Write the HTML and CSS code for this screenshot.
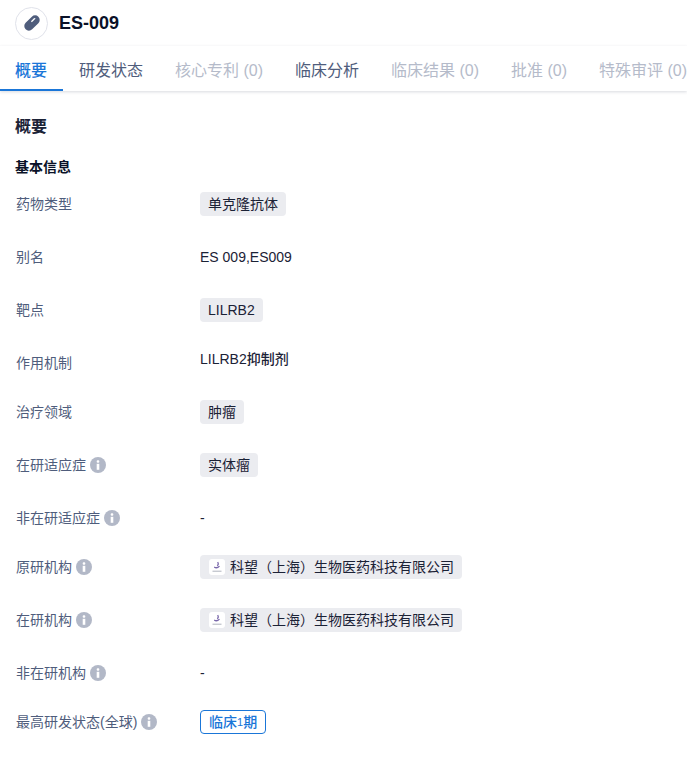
FILE: index.html
```html
<!DOCTYPE html>
<html lang="zh-CN">
<head>
<meta charset="utf-8">
<title>ES-009</title>
<link rel="stylesheet" href="styles.css">
</head>
<body>
<svg class="defs" width="0" height="0" aria-hidden="true">
  <symbol id="info" viewBox="0 0 16 16"><circle cx="8" cy="8" r="8" fill="#b2b8c7"/><rect x="6.7" y="3.2" width="2.6" height="2.6" rx="1" fill="#fff"/><rect x="6.7" y="6.8" width="2.6" height="6" fill="#fff"/></symbol>
  <symbol id="orglogo" viewBox="0 0 16 16"><path d="M8.600 3.200c1 1.400.9 2.600-.4 3.500M5.200 8c1.400 1 3.400 1 5.300-.9" fill="none" stroke="#7a68ab" stroke-width="1.300"/><path d="M3.500 12.200h9" stroke="#aeb2bd" stroke-width="1"/></symbol>
</svg>
<header class="head">
  <span class="avatar">
    <svg width="20" height="20" viewBox="0 0 20 20"><g transform="rotate(-45 10 10)"><rect x="1" y="5.400" width="18" height="9.200" rx="4.600" fill="#4f5d7c"/><path d="M10.500 8h3.800a1.500 1.500 0 0 1 1.500 1.300h-5.300z" fill="#fff"/></g></svg>
  </span>
  <h1 class="title">ES-009</h1>
</header>
<nav class="tabs">
  <a class="tab active">概要</a>
  <a class="tab">研发状态</a>
  <a class="tab off">核心专利 (0)</a>
  <a class="tab">临床分析</a>
  <a class="tab off">临床结果 (0)</a>
  <a class="tab off">批准 (0)</a>
  <a class="tab off">特殊审评 (0)</a>
</nav>
<main class="content">
  <h2 class="section">概要</h2>
  <h3 class="sub">基本信息</h3>
  <div class="row"><div class="label">药物类型</div><div class="value"><span class="tag">单克隆抗体</span></div></div>
  <div class="row"><div class="label">别名</div><div class="value">ES 009,ES009</div></div>
  <div class="row"><div class="label">靶点</div><div class="value"><span class="tag">LILRB2</span></div></div>
  <div class="row short"><div class="label">作用机制</div><div class="value top">LILRB2抑制剂</div></div>
  <div class="row"><div class="label">治疗领域</div><div class="value"><span class="tag">肿瘤</span></div></div>
  <div class="row"><div class="label">在研适应症<svg class="info"><use href="#info"/></svg></div><div class="value"><span class="tag">实体瘤</span></div></div>
  <div class="row short"><div class="label">非在研适应症<svg class="info"><use href="#info"/></svg></div><div class="value">-</div></div>
  <div class="row"><div class="label">原研机构<svg class="info"><use href="#info"/></svg></div><div class="value"><span class="tag org"><svg class="logo"><use href="#orglogo"/></svg>科望（上海）生物医药科技有限公司</span></div></div>
  <div class="row"><div class="label">在研机构<svg class="info"><use href="#info"/></svg></div><div class="value"><span class="tag org"><svg class="logo"><use href="#orglogo"/></svg>科望（上海）生物医药科技有限公司</span></div></div>
  <div class="row short"><div class="label">非在研机构<svg class="info"><use href="#info"/></svg></div><div class="value">-</div></div>
  <div class="row"><div class="label">最高研发状态(全球)<svg class="info"><use href="#info"/></svg></div><div class="value"><span class="tag status">临床<span class="num">1</span>期</span></div></div>
</main>
</body>
</html>
```
FILE: styles.css
```css
* { box-sizing: border-box; }
html, body { margin: 0; padding: 0; }
body {
  width: 687px;
  height: 762px;
  overflow: hidden;
  background: #fff;
  color: #020817;
  font-family: "Liberation Sans", "Noto Sans CJK SC", sans-serif;
  font-size: 14px;
}
.defs { display: block; height: 0; }
.head {
  display: flex;
  align-items: center;
  gap: 11px;
  height: 46px;
  padding: 0 15px;
}
.avatar {
  width: 33px;
  height: 33px;
  border: 1px solid #e0e2ea;
  border-radius: 50%;
  display: flex;
  align-items: center;
  justify-content: center;
}
.title { margin: 0; font-size: 18px; line-height: 24px; font-weight: 700; color: #0a1128; }
.tabs {
  display: flex;
  height: 45px;
  white-space: nowrap;
  overflow: hidden;
  box-shadow: 0 1px 3px rgba(40, 50, 80, .18);
}
.tab {
  flex: none;
  padding: 0 16px;
  height: 45px;
  line-height: 49px;
  font-size: 16px;
  color: #4f5d7c;
}
.tab.off { color: #b5bbca; }
.tab.active { padding: 0 16px 0 15px; color: #1a76d8; font-weight: 500; border-bottom: 2px solid #1a76d8; }
.content { padding: 0 15px; }
.section { margin: 26px 0 0; font-size: 16px; line-height: 20px; font-weight: 700; color: #1b2236; }
.sub { margin: 20px 0 0; font-size: 14px; line-height: 20px; font-weight: 700; color: #0a1128; }
.row { display: flex; align-items: flex-start; height: 24px; margin-bottom: 29px; }
.sub + .row { margin-top: 15px; }
.row.short { margin-bottom: 25px; }
.label {
  width: 185px;
  flex: none;
  display: flex;
  align-items: center;
  height: 22px;
  padding-left: 1px;
  font-size: 14px;
  color: #4f5d7c;
}
.value { font-size: 14px; line-height: 24px; color: #1b2236; }
.value.top { line-height: 16px; font-weight: 500; }
.tag {
  display: inline-flex;
  align-items: center;
  height: 24px;
  padding: 0 8px;
  border-radius: 4px;
  background: #ebecf0;
  color: #1b2236;
  line-height: 24px;
}
.tag.status {
  background: #fff;
  border: 1px solid #1a76d8;
  color: #1a76d8;
  font-weight: 500;
  padding: 0 8px;
}
.num { font-size: 11px; }
.logo {
  width: 16px;
  height: 16px;
  flex: none;
  border-radius: 3px;
  background: #fff;
  margin: 0 5px 0 1px;
}
.info {
  width: 16px;
  height: 16px;
  flex: none;
  margin: 2px 0 0 4px;
}
```
